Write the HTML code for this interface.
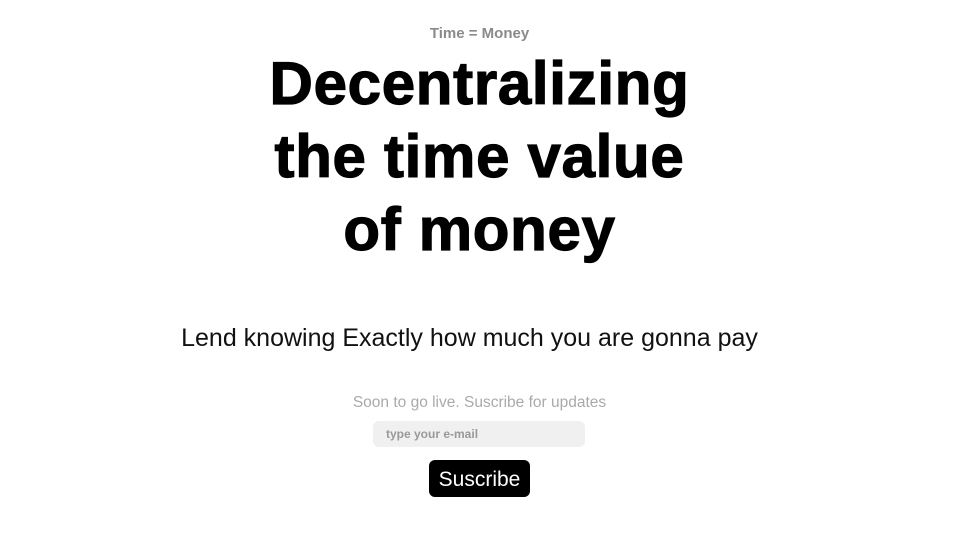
<!DOCTYPE html>
<html><head><style>
html,body{margin:0;padding:0;background:#fff;width:959px;height:559px;overflow:hidden;font-family:"Liberation Sans",sans-serif}
.a{position:absolute;left:0;width:959px;text-align:center;white-space:nowrap}
.top{top:25px;font-size:15px;font-weight:bold;color:#8a8a8a}
.h{font-size:60px;font-weight:bold;color:#000;letter-spacing:0.7px;line-height:73px;-webkit-text-stroke:1.2px #000}
.sub{top:324px;left:-10px;font-size:25px;color:#111}
.soon{top:394px;font-size:15.5px;color:#aaa}
.inp{position:absolute;left:373px;top:421px;width:212px;height:26px;background:#f0f0f0;border-radius:6px;font-size:12px;font-weight:bold;color:#999;line-height:26px;box-sizing:border-box;padding-left:13px}
.btn{position:absolute;left:429px;top:460px;width:101px;height:37px;background:#000;border-radius:6px;color:#fff;font-size:21px;text-align:center;line-height:39px}
</style></head><body>
<div class="a top">Time = Money</div>
<div class="a h" style="top:47px">Decentralizing</div>
<div class="a h" style="top:120px">the time value</div>
<div class="a h" style="top:193px">of money</div>
<div class="a sub">Lend knowing Exactly how much you are gonna pay</div>
<div class="a soon">Soon to go live. Suscribe for updates</div>
<div class="inp">type your e-mail</div>
<div class="btn">Suscribe</div>
</body></html>
